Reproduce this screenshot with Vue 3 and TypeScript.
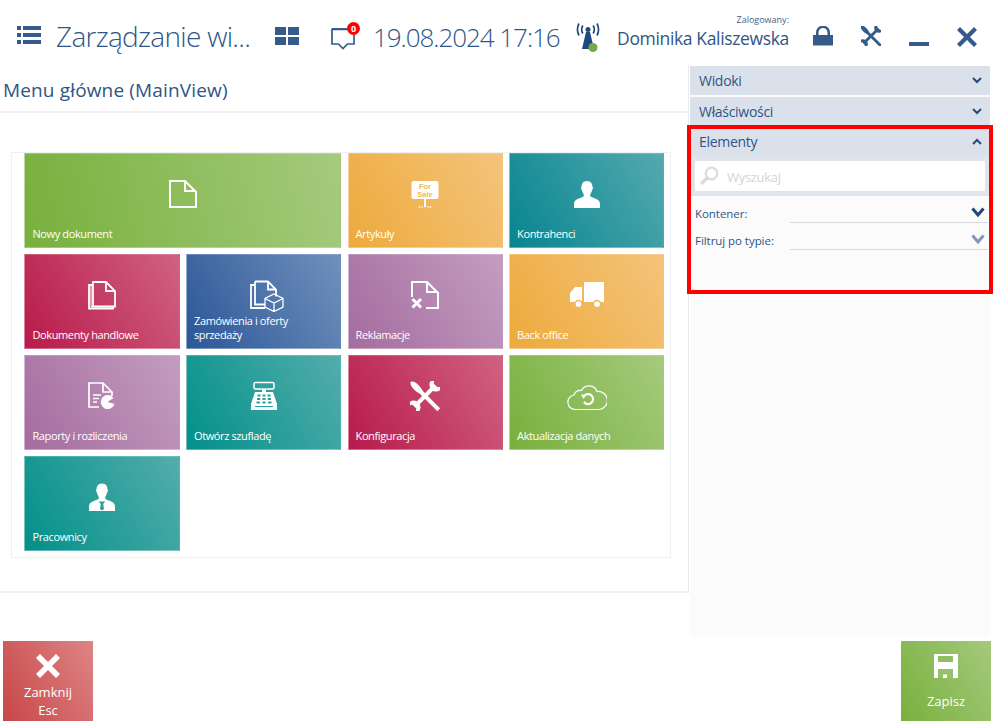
<script setup lang="ts">
interface Tile { label: string; icon: string; color: string; wide?: boolean }
const tiles: Tile[] = [
  { label: 'Nowy dokument', icon: 'doc', color: 'green', wide: true },
  { label: 'Artykuły', icon: 'sale', color: 'orange' },
  { label: 'Kontrahenci', icon: 'person', color: 'teal' },
  { label: 'Dokumenty handlowe', icon: 'docs', color: 'red' },
  { label: 'Zamówienia i oferty sprzedaży', icon: 'order', color: 'blue' },
  { label: 'Reklamacje', icon: 'claim', color: 'purple' },
  { label: 'Back office', icon: 'truck', color: 'orange' },
  { label: 'Raporty i rozliczenia', icon: 'report', color: 'purple' },
  { label: 'Otwórz szufladę', icon: 'till', color: 'teal2' },
  { label: 'Konfiguracja', icon: 'tools', color: 'red' },
  { label: 'Aktualizacja danych', icon: 'cloud', color: 'green' },
  { label: 'Pracownicy', icon: 'staff', color: 'teal2' },
]
const wrench =
  'M-2 -9.500C-5.500 -10.500 -8 -14 -6 -20L-2.800 -15H2.800L6 -20C8 -14 5.500 -10.500 2 -9.500V9.500C5.500 10.500 8 14 6 20L2.800 15H-2.800L-6 20C-8 14 -5.500 10.500 -2 9.500Z'
const driver =
  'M0 -20C3 -19.500 4 -13 2.500 -7L2 -5V19.500H-2V-5L-2.500 -7C-4 -13 -3 -19.500 0 -20Z'
</script>

<template>
  <div class="app">
    <header class="top">
      <svg class="i-menu" viewBox="0 0 24 18">
        <path d="M0 0h4v4H0zM6 0h18v4H6zM0 7h4v4H0zM6 7h18v4H6zM0 14h4v4H0zM6 14h18v4H6z" />
      </svg>
      <span class="title">Zarządzanie wi...</span>
      <svg class="i-grid" viewBox="0 0 24 18">
        <path d="M0 0h11v8H0zM13 0h11v8H13zM0 10h11v8H0zM13 10h11v8H13z" />
      </svg>
      <span class="chat">
        <svg class="i-chat" viewBox="0 0 24 24">
          <path d="M1 3.500h22v14.500h-6.500l-4.500 4.500-4.500-4.500H1z" fill="none" stroke="#345b8c" stroke-width="1.700" />
          <path d="M1 2h22v2H1z" fill="#345b8c" />
        </svg>
        <span class="badge">0</span>
      </span>
      <span class="date">19.08.2024 17:16</span>
      <svg class="i-ant" viewBox="0 0 24 30">
        <path d="M10 9h4l4 17H6z" fill="#1f4a80" />
        <circle cx="12" cy="6.500" r="2.500" fill="#1f4a80" />
        <path d="M6.800 2.500a8 8 0 0 0 0 8M17.200 2.500a8 8 0 0 1 0 8M3 .5a13 13 0 0 0 0 12M21 .5a13 13 0 0 1 0 12" fill="none" stroke="#1f4a80" stroke-width="1.700" />
        <circle cx="17" cy="24.500" r="4.500" fill="#7aa845" />
      </svg>
      <div class="user">
        <span class="logged">Zalogowany:</span>
        <span class="name">Dominika Kaliszewska</span>
      </div>
      <svg class="i-lock" viewBox="0 0 20 20">
        <path d="M3 9V6.500a7 7 0 0 1 14 0V9h-2.500V6.500a4.500 4.500 0 0 0-9 0V9z" />
        <path d="M0 9h20v10.500H0z" />
      </svg>
      <svg class="i-tools" viewBox="0 0 28 28">
        <path :d="wrench" transform="translate(14 14) rotate(45)" />
        <path :d="driver" transform="translate(14 14) rotate(-45)" />
      </svg>
      <span class="i-min"></span>
      <svg class="i-close" viewBox="0 0 20 20">
        <path d="M3 0 10 7l7-7 3 3-7 7 7 7-3 3-7-7-7 7-3-3 7-7-7-7z" />
      </svg>
    </header>

    <div class="body">
      <main class="main">
        <h1 class="view-title">Menu główne (MainView)</h1>
        <div class="canvas">
          <div class="tiles">
            <div class="grid">
              <div v-for="t in tiles" :key="t.label" class="tile" :class="[t.color, { wide: t.wide }]">
                <svg v-if="t.icon === 'doc'" class="ico" viewBox="0 0 30 30" fill="none" stroke="#fff" stroke-width="2">
                  <path d="M2 2h15l11 11v15H2z" /><path d="M17 2v10h11" />
                </svg>
                <svg v-else-if="t.icon === 'sale'" class="ico" viewBox="0 0 30 30">
                  <rect x="1.500" y="2" width="27" height="18" rx="2" fill="#fff" />
                  <text x="15" y="10" class="sale-t">For</text>
                  <text x="15" y="17.500" class="sale-t">Sale</text>
                  <path d="M14 20h2v8h-2z" fill="#fff" />
                  <path d="M9 29l1-2M12 29v-2M18 29v-2M21 29l-1-2" stroke="#fff" stroke-width="1" />
                </svg>
                <svg v-else-if="t.icon === 'person'" class="ico" viewBox="0 0 30 30" fill="#fff">
                  <path d="M15 2c4 0 5.500 3 5.500 6 .6.300.7 2-.4 3-.4 2-1.300 3.500-1.800 4.200v2.300c3 1.800 9.700 2.200 9.700 7.500V29H2v-4c0-5.300 6.700-5.700 9.700-7.500v-2.300c-.5-.7-1.400-2.200-1.800-4.200-1.100-1-1-2.700-.4-3 0-3 1.500-6 5.500-6z" />
                </svg>
                <svg v-else-if="t.icon === 'docs'" class="ico" viewBox="0 0 30 30" fill="none" stroke="#fff" stroke-width="1.800">
                  <path d="M6 2h13l9 9v15.500H6z" /><path d="M19 2v9h9" />
                  <path d="M6 5H2v23.500h24v-2" /><path d="M4 5v21.500h2" stroke-width="1" />
                </svg>
                <svg v-else-if="t.icon === 'order'" class="ico order-ico" viewBox="0 0 36 32" fill="none" stroke="#fff" stroke-width="1.800">
                  <path d="M6 1.500h13l8 8v7M6 1.500v23h10" /><path d="M19 1.500v8h8" />
                  <path d="M6 5H2v23h14" />
                  <path d="M25 14l9 4.500v8.500l-9 4.500-9-4.500v-8.500zM16 18.500l9 4.500 9-4.500M25 23v8.500" stroke-width="1.300" />
                </svg>
                <svg v-else-if="t.icon === 'claim'" class="ico" viewBox="0 0 30 30" fill="none" stroke="#fff" stroke-width="2">
                  <path d="M2 17V2h15l11 11v15H16" /><path d="M17 2v10h11" />
                  <path d="M2.500 19 11 27.500M11 19l-8.500 8.500" stroke-width="3" />
                </svg>
                <svg v-else-if="t.icon === 'truck'" class="ico truck-ico" viewBox="0 0 34 28" fill="#fff">
                  <path d="M14 0h20v20H14zM5 5h7v15H0v-9z" />
                  <circle cx="8.500" cy="22" r="3.600" class="wheel" />
                  <circle cx="27" cy="22" r="3.600" class="wheel" />
                </svg>
                <svg v-else-if="t.icon === 'report'" class="ico" viewBox="0 0 30 30" fill="none" stroke="#fff" stroke-width="1.700">
                  <path d="M12 26H2V2h14l9 9v4" /><path d="M16 2v9h9" />
                  <path d="M6 14h8M6 17.500h6M6 21h4" stroke-width="1.500" />
                  <path d="M20.500 21 26.500 17A7 7 0 1 0 27.500 23Z" fill="#fff" stroke="none" />
                </svg>
                <svg v-else-if="t.icon === 'till'" class="ico" viewBox="0 0 30 30">
                  <rect x="5" y="1.500" width="20" height="6.500" rx="1.500" fill="none" stroke="#fff" stroke-width="1.500" />
                  <path d="M13 8h4v3h-4z" fill="#fff" />
                  <path d="M6 11h18l4 12v6H2v-6z" fill="#fff" />
                  <path d="M8.500 13.500h3v2h-3zM13.500 13.500h3v2h-3zM18.500 13.500h3v2h-3zM8 17h3.300v2H8zM13.500 17h3v2h-3zM18.700 17H22v2h-3.300zM7.500 20.500h3.500v2H7.500zM13.500 20.500h3v2h-3zM19 20.500h3.500v2H19zM6 25h18v1H6z" class="till-h" />
                </svg>
                <svg v-else-if="t.icon === 'tools'" class="ico" viewBox="0 0 30 30" fill="#fff">
                  <path :d="wrench" transform="translate(15 15) rotate(45)" />
                  <path :d="driver" transform="translate(15 15) rotate(-45)" />
                </svg>
                <svg v-else-if="t.icon === 'cloud'" class="ico cloud-ico" viewBox="0 0 40 30" fill="none" stroke="#fff" stroke-width="1.200">
                  <path d="M8 28.500a7.300 7.300 0 0 1-1-14.500 7 7 0 0 1 7.500-4.500A8.500 8.500 0 0 1 30 10.500a9 9 0 0 1 2.500 18z" />
                  <path d="M16.500 16a5 5 0 1 1 .5 5" stroke-width="2.200" />
                  <path d="M14 13.500l5 .5-2.500 4z" fill="#fff" stroke="none" />
                </svg>
                <svg v-else-if="t.icon === 'staff'" class="ico" viewBox="0 0 30 30" fill="#fff">
                  <path d="M15 1.500c4 0 5.500 3 5.500 6 .6.300.7 2-.4 3-.4 2-1.300 3.500-1.800 4.200v2.300c3 1.800 9.700 2.200 9.700 7.500V29H2v-4.500c0-5.300 6.700-5.700 9.700-7.500v-2.300c-.5-.7-1.400-2.200-1.800-4.200-1.100-1-1-2.700-.4-3 0-3 1.500-6 5.500-6z" />
                  <path d="M11.800 19.500h6.400l-2 2.500.8 5-2 1.500-2-1.500.8-5z" class="tie" />
                </svg>
                <span class="label">{{ t.label }}</span>
              </div>
            </div>
          </div>
        </div>
      </main>

      <aside class="side">
        <div class="bar">Widoki<svg class="chev" viewBox="0 0 10 7"><path d="M1 1l4 4 4-4" /></svg></div>
        <div class="bar">Właściwości<svg class="chev" viewBox="0 0 10 7"><path d="M1 1l4 4 4-4" /></svg></div>
        <section class="elements">
          <div class="bar">Elementy<svg class="chev" viewBox="0 0 10 7"><path d="M1 6l4-4 4 4" /></svg></div>
          <div class="search-wrap">
            <div class="search">
              <svg class="i-search" viewBox="0 0 20 20" fill="none" stroke="#dcdcdc">
                <circle cx="12.500" cy="7.500" r="5.800" stroke-width="2.200" />
                <path d="M8 12 2 18" stroke-width="3.500" />
              </svg>
              <span class="s-text">Wyszukaj</span>
            </div>
          </div>
          <div class="field">
            <span class="f-label">Kontener:</span>
            <span class="f-line"><svg class="f-chev" viewBox="0 0 14 11"><path d="M1.500 1.500 7 8l5.500-6.500" /></svg></span>
          </div>
          <div class="field">
            <span class="f-label">Filtruj po typie:</span>
            <span class="f-line"><svg class="f-chev dim" viewBox="0 0 14 11"><path d="M1.500 1.500 7 8l5.500-6.500" /></svg></span>
          </div>
          <div class="frame"></div>
        </section>
      </aside>
    </div>

    <footer class="foot">
      <button class="act close">
        <svg class="act-x" viewBox="0 0 24 24"><path d="M4 0l8 8 8-8 4 4-8 8 8 8-4 4-8-8-8 8-4-4 8-8-8-8z" /></svg>
        <span>Zamknij</span>
        <span>Esc</span>
      </button>
      <button class="act save">
        <svg class="act-s" viewBox="0 0 24 24">
          <path d="M0 0h24v24H0z" fill="#fff" />
          <path d="M4 2h15v6H4z" fill="#92bd66" />
          <path d="M4 15h15v9H4z" fill="#96c06b" />
          <path d="M9 20.500h4V24H9z" fill="#fff" />
        </svg>
        <span>Zapisz</span>
      </button>
    </footer>
  </div>
</template>

<style scoped>
.app {
  width: 998px;
  height: 728px;
  overflow: hidden;
  background: #fff;
  display: flex;
  flex-direction: column;
  font-family: "Open Sans", "Noto Sans", sans-serif;
  color: #2f5587;
}
.top {
  height: 66px;
  flex: none;
  display: flex;
  align-items: flex-start;
  position: relative;
}
.top svg { fill: #345b8c; flex: none; }
.i-menu { width: 24px; height: 18px; margin: 26px 0 0 17px; }
.title {
  margin: 16px 0 0 15px;
  width: 219px;
  font-size: 28px;
  font-weight: 300;
  line-height: 40px;
  letter-spacing: -0.7px;
  white-space: nowrap;
}
.i-grid { width: 24px; height: 18px; margin: 27px 0 0 0; }
.chat { position: relative; width: 24px; height: 24px; margin: 26px 0 0 32px; }
.i-chat { width: 24px; height: 24px; display: block; }
.badge {
  position: absolute;
  right: -5px;
  top: -4px;
  width: 13px;
  height: 13px;
  border-radius: 50%;
  background: #f00;
  color: #fff;
  font-size: 9px;
  font-weight: 700;
  line-height: 13px;
  text-align: center;
}
.date {
  margin: 17px 0 0 18px;
  width: 191px;
  font-size: 26px;
  font-weight: 300;
  line-height: 40px;
  letter-spacing: -1.05px;
  white-space: nowrap;
}
.i-ant { width: 24px; height: 30px; margin: 23px 0 0 12px; }
.user {
  width: 173px;
  margin: 14px 0 0 16px;
  display: flex;
  flex-direction: column;
  align-items: flex-end;
}
.logged { font-size: 9px; line-height: 12px; color: #44618a; }
.name { font-size: 17.500px; line-height: 24px; letter-spacing: -0.35px; white-space: nowrap; }
.i-lock { width: 20px; height: 20px; margin: 26px 0 0 24px; }
.i-tools { width: 20px; height: 20px; margin: 26px 0 0 28px; }
.i-min { width: 20px; height: 4px; margin: 42px 0 0 28px; background: #345b8c; }
.i-close { width: 20px; height: 20px; margin: 27px 0 0 28px; }

.body { height: 570px; flex: none; display: flex; }
.main { width: 688px; flex: none; border-right: 1px solid #e6ebf2; height: 527px; }
.view-title {
  margin: 0;
  height: 45px;
  padding-left: 3px;
  font-size: 19px;
  font-weight: 400;
  line-height: 48px;
  letter-spacing: 0.15px;
  border-bottom: 2px solid #eff2f7;
  white-space: nowrap;
}
.canvas { height: 480px; box-sizing: border-box; padding: 39px 0 0 11px; border-bottom: 2px solid #eff2f7; }
.tiles {
  width: 660px;
  box-sizing: border-box;
  padding: 0 6px 6px 12.450px;
  border: 1px solid #edf0f5;
}
.grid {
  display: grid;
  grid-template-columns: repeat(4, 155.300px);
  grid-auto-rows: 95px;
  gap: 6px 6.250px;
}
.tile {
  position: relative;
  display: flex;
  flex-direction: column;
  align-items: center;
  padding-top: 25px;
  box-sizing: border-box;
  border: 1px solid rgba(255, 255, 255, 0.28);
  color: #fff;
}
.wide { grid-column: span 2; }
.green { background: linear-gradient(60deg, #78b03c, #a5ca7d); color: #8dbb5e; }
.wide.green { background: linear-gradient(78deg, #78b03c, #a5ca7d); }
.orange { background: linear-gradient(60deg, #edaa3c, #f4c47b); color: #f0b65a; }
.teal { background: linear-gradient(60deg, #07858f, #54a9af); color: #2d97a0; }
.teal2 { background: linear-gradient(60deg, #02908a, #53adab); color: #2d9e9a; }
.red { background: linear-gradient(60deg, #b81a4b, #d06281); color: #c63d65; }
.blue { background: linear-gradient(60deg, #2b5797, #7090bc); color: #4c72a8; }
.purple { background: linear-gradient(60deg, #a56c9f, #c39dc0); color: #b585b0; }
.ico { width: 30px; height: 30px; flex: none; }
.order-ico { width: 36px; height: 32px; margin-left: 6px; }
.truck-ico { width: 34px; height: 28px; margin-top: 2px; }
.cloud-ico { width: 40px; height: 30px; }
.sale-t {
  font-family: "Liberation Sans", sans-serif;
  font-size: 7.500px;
  font-weight: 700;
  text-anchor: middle;
  fill: #f0b65a;
}
.till-h { fill: currentColor; }
.tie { fill: currentColor; }
.wheel { fill: #fff; stroke: currentColor; stroke-width: 1.500px; }
.label {
  position: absolute;
  left: 7px;
  right: 6px;
  bottom: 6px;
  color: #fff;
  font-size: 11px;
  line-height: 14px;
  letter-spacing: -0.38px;
}

.side {
  width: 300px;
  margin-left: 1px;
  flex: none;
  background: #fbfbfb;
  display: flex;
  flex-direction: column;
  gap: 2px;
}
.bar {
  height: 29px;
  flex: none;
  box-sizing: border-box;
  background: #dbe1ea;
  padding: 0 9px;
  display: flex;
  align-items: center;
  justify-content: space-between;
  font-size: 14px;
  letter-spacing: -0.3px;
}
.chev { width: 10px; height: 7px; margin-right: -1px; fill: none; stroke: #234b7e; stroke-width: 2; }
.elements { position: relative; padding-bottom: 44px; }
.elements .bar { padding-bottom: 2px; }
.search-wrap { background: #e0e5ec; padding: 4px 5px 5px; }
.search {
  height: 30px;
  background: #fff;
  display: flex;
  align-items: center;
  color: #d4d4d4;
  font-size: 13px;
  letter-spacing: -0.3px;
}
.s-text { margin-top: 2px; }
.i-search { width: 20px; height: 20px; margin: 0 8px 0 4px; }
.field {
  display: flex;
  align-items: flex-end;
  height: 27px;
  padding: 0 2px 0 5px;
}
.f-label { width: 95px; font-size: 11.500px; line-height: 18px; letter-spacing: -0.05px; white-space: nowrap; }
.f-line { flex: 1; height: 20px; border-bottom: 1px solid #d6dae0; display: flex; justify-content: flex-end; }
.f-chev { width: 14px; height: 11px; margin: 5px 3px 0 0; fill: none; stroke: #1e4679; stroke-width: 3; }
.f-chev.dim { stroke: #8097b8; }
.frame {
  position: absolute;
  inset: -3px -3px 0 -3px;
  border: 4px solid #fe0000;
  pointer-events: none;
}

.foot { flex: 1; display: flex; justify-content: space-between; padding: 5px 7px 7px 3px; }
.act {
  width: 90px;
  height: 80px;
  padding: 0;
  border: 0;
  color: #fff;
  font-family: inherit;
  font-size: 13px;
  line-height: 18px;
  display: flex;
  flex-direction: column;
  align-items: center;
  letter-spacing: 0;
}
.close { background: linear-gradient(60deg, #c84748, #dd8485); }
.save { background: linear-gradient(60deg, #79b03e, #a4c97c); }
.act-x { width: 24px; height: 24px; fill: #fff; margin: 13px 0 5px; }
.act-s { width: 24px; height: 24px; margin: 13px 0 14px; }
</style>

<style>
html, body { margin: 0; background: #fff; }
</style>
